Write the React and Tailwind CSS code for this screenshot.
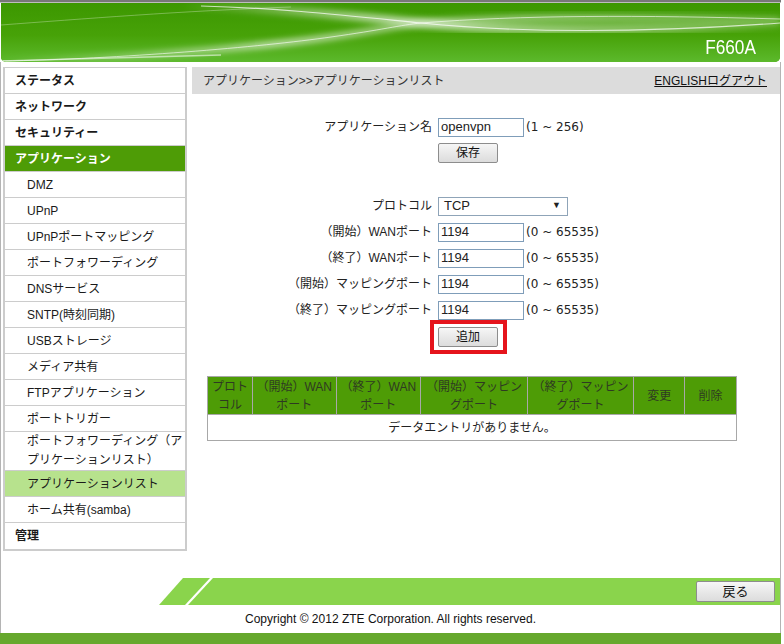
import React from 'react';

const FONT = { fontFamily: '"Liberation Sans", "Noto Sans CJK JP", sans-serif' };
const RANGE = { fontFamily: '"DejaVu Sans", "Noto Sans CJK JP", sans-serif' };

const menu = [
  { t: 'ステータス', top: true },
  { t: 'ネットワーク', top: true },
  { t: 'セキュリティー', top: true },
  { t: 'アプリケーション', top: true, active: true },
  { t: 'DMZ' },
  { t: 'UPnP' },
  { t: 'UPnPポートマッピング' },
  { t: 'ポートフォワーディング' },
  { t: 'DNSサービス' },
  { t: 'SNTP(時刻同期)' },
  { t: 'USBストレージ' },
  { t: 'メディア共有' },
  { t: 'FTPアプリケーション' },
  { t: 'ポートトリガー' },
  { t: 'ポートフォワーディング（ア', t2: 'プリケーションリスト）' },
  { t: 'アプリケーションリスト', selected: true },
  { t: 'ホーム共有(samba)' },
  { t: '管理', top: true },
];

const Header = () => (
  <div className="relative mx-[1px] h-[59px] rounded-b-[5px] overflow-hidden bg-[#4aa40c]">
    <svg className="absolute inset-0" width="779" height="59" viewBox="0 0 779 59" preserveAspectRatio="none">
      <defs>
        <linearGradient id="hg" x1="0" y1="0" x2="0" y2="1">
          <stop offset="0" stopColor="#3c9700" />
          <stop offset="0.55" stopColor="#47a208" />
          <stop offset="1" stopColor="#5cb92c" />
        </linearGradient>
        <linearGradient id="glow" x1="0" y1="0" x2="1" y2="0">
          <stop offset="0" stopColor="#ffffff" stopOpacity="0" />
          <stop offset="0.35" stopColor="#ffffff" stopOpacity="0.7" />
          <stop offset="0.6" stopColor="#ffffff" stopOpacity="0.45" />
          <stop offset="1" stopColor="#ffffff" stopOpacity="0.15" />
        </linearGradient>
        <filter id="blur"><feGaussianBlur stdDeviation="3" /></filter>
      </defs>
      <rect width="779" height="59" fill="url(#hg)" />
      <path d="M420 20 C520 12 640 12 779 16 L779 20 C640 30 520 30 420 20 Z" fill="#ffffff" fillOpacity="0.18" filter="url(#blur)" />
      <path d="M0 58 C120 56 260 44 330 34 C380 27 400 22 420 20 C520 12 640 12 779 16" fill="none" stroke="url(#glow)" strokeWidth="6" filter="url(#blur)" />
      <path d="M0 58 C120 56 260 44 330 34 C380 27 400 22 420 20 C520 12 640 12 779 16" fill="none" stroke="#ffffff" strokeOpacity="0.6" strokeWidth="1" />
      <path d="M180 3 C260 4 340 12 420 20 C520 30 640 30 779 20" fill="none" stroke="url(#glow)" strokeWidth="8" filter="url(#blur)" />
      <path d="M200 3 C280 5 350 13 420 20 C520 30 640 30 779 20" fill="none" stroke="#ffffff" strokeOpacity="0.7" strokeWidth="1.2" />
      <path d="M0 22 C80 16 180 8 290 4" fill="none" stroke="#ffffff" strokeOpacity="0.3" strokeWidth="1" />
      <path d="M0 58 C80 56 140 54 220 52" fill="none" stroke="#ffffff" strokeOpacity="0.55" strokeWidth="1.5" />
    </svg>
    <div className="absolute right-[24px] top-[33px] text-white text-[21px] leading-none scale-x-[0.82] origin-right" style={{ fontFamily: '"Liberation Sans", sans-serif' }}>
      F660A
    </div>
  </div>
);

const Sidebar = () => (
  <div className="w-[184px] self-start border-x-2 border-t border-b-2 border-[#cccccc] text-[12px] text-[#1a1a1a]">
    {menu.map((m, i) => (
      <div
        key={i}
        className={`border-b border-[#cccccc] last:border-b-0 flex flex-col justify-center ${m.t2 ? 'h-[39px] leading-[19px]' : 'h-[26px]'} ${m.top ? 'pl-[10px] font-bold' : 'pl-[22px]'} ${m.active ? 'bg-[#4e9c06] text-white' : ''} ${m.selected ? 'bg-[#b7e28d]' : ''}`}
      >
        <span>{m.t}</span>
        {m.t2 && <span>{m.t2}</span>}
      </div>
    ))}
  </div>
);

const Btn = ({ children, className = '' }) => (
  <button className={`h-[20px] border border-[#8d8d8d] rounded-[2px] bg-gradient-to-b from-[#f6f6f6] to-[#dcdcdc] text-[12px] text-[#111] leading-none ${className}`}>
    {children}
  </button>
);

const Field = ({ label, value, range }) => (
  <div className="flex items-center h-[26px]">
    <div className="w-[246px] text-right pr-[6px]">{label}</div>
    <div className="w-[86px] h-[19px] border border-[#7f9db9] bg-white px-[2px] flex items-center text-[13px]">{value}</div>
    <div className="pl-[2px] text-[12px]" style={RANGE}>{range}</div>
  </div>
);

const headers = [
  ['プロト', 'コル', 45],
  ['（開始）WAN', 'ポート', 84],
  ['（終了）WAN', 'ポート', 85],
  ['（開始）マッピン', 'グポート', 107],
  ['（終了）マッピン', 'グポート', 107],
  ['変更', null, 51],
  ['削除', null, 51],
];

const Main = () => (
  <div className="flex-1 ml-[5px] text-[12px] text-[#222]">
    <div className="h-[27px] bg-[#dcdcdc] flex items-center justify-between pl-[11px] pr-[13px]">
      <span className="text-[#333]">アプリケーション&gt;&gt;アプリケーションリスト</span>
      <span className="underline text-[#111]">ENGLISHログアウト</span>
    </div>

    <div className="mt-[20px]">
      <Field label="アプリケーション名" value="openvpn" range="(1 ~ 256)" />
      <div className="pl-[246px] mt-[3px]">
        <Btn className="w-[60px]">保存</Btn>
      </div>
    </div>

    <div className="mt-[30px]">
      <div className="flex items-center h-[26px]">
        <div className="w-[246px] text-right pr-[6px]">プロトコル</div>
        <div className="w-[130px] h-[19px] border border-[#8fa4b8] bg-white flex items-center justify-between pl-[5px] pr-[6px] text-[13px]">
          <span>TCP</span>
          <span className="text-[9px]">▼</span>
        </div>
      </div>
      <Field label="（開始）WANポート" value="1194" range="(0 ~ 65535)" />
      <Field label="（終了）WANポート" value="1194" range="(0 ~ 65535)" />
      <Field label="（開始）マッピングポート" value="1194" range="(0 ~ 65535)" />
      <Field label="（終了）マッピングポート" value="1194" range="(0 ~ 65535)" />
      <div className="pl-[246px] mt-[4px]">
        <div className="relative w-[60px]">
          <Btn className="w-[60px]">追加</Btn>
          <div className="absolute -left-[8px] -top-[7px] w-[77px] h-[34px] border-[4px] border-[#e5141c]" />
        </div>
      </div>
    </div>

    <div className="ml-[15px] mt-[29px] w-[530px] border border-[#a8a8a8]">
      <div className="flex bg-[#4e9c06] text-[#2e3a22]">
        {headers.map(([a, b, w], i) => (
          <div
            key={i}
            className={`h-[37px] flex flex-col items-center justify-center leading-[18px] ${i < headers.length - 1 ? 'border-r border-[#a8a8a8]' : ''}`}
            style={{ width: w }}
          >
            <span>{a}</span>
            {b && <span>{b}</span>}
          </div>
        ))}
      </div>
      <div className="h-[26px] border-t border-[#a8a8a8] flex items-center justify-center text-[#222]">
        データエントリがありません。
      </div>
    </div>
  </div>
);

export default function App() {
  return (
    <div className="w-[784px] h-[644px] bg-white flex flex-col" style={FONT}>
      <div className="w-[781px] h-[3px] border-t-2 border-[#777777] bg-[#bdbdbd]" />
      <div className="w-[781px]">
        <Header />
      </div>
      <div className="w-[781px] flex-1 flex flex-col border-x border-[#b4b4b4]">
        <div className="flex-1 flex pt-[5px] pl-[2px]">
          <Sidebar />
          <Main />
        </div>
        <div className="h-[27px] flex ml-[157px]">
          <svg width="57" height="27" viewBox="0 0 57 27" className="shrink-0">
            <polygon points="1,27 25,0 52,0 27,27" fill="#8ad44c" />
            <polygon points="30,27 55,0 57,0 57,27" fill="#8ad44c" />
          </svg>
          <div className="flex-1 bg-[#8ad44c] flex items-center justify-end pr-[5px]">
            <Btn className="w-[79px] h-[21px] text-[13px]">戻る</Btn>
          </div>
        </div>
        <div className="h-[28px] flex items-center justify-center text-[12px] text-[#111]">
          Copyright © 2012 ZTE Corporation. All rights reserved.
        </div>
      </div>
      <div className="w-[781px] h-[11px] bg-[#66a82d]" />
    </div>
  );
}
